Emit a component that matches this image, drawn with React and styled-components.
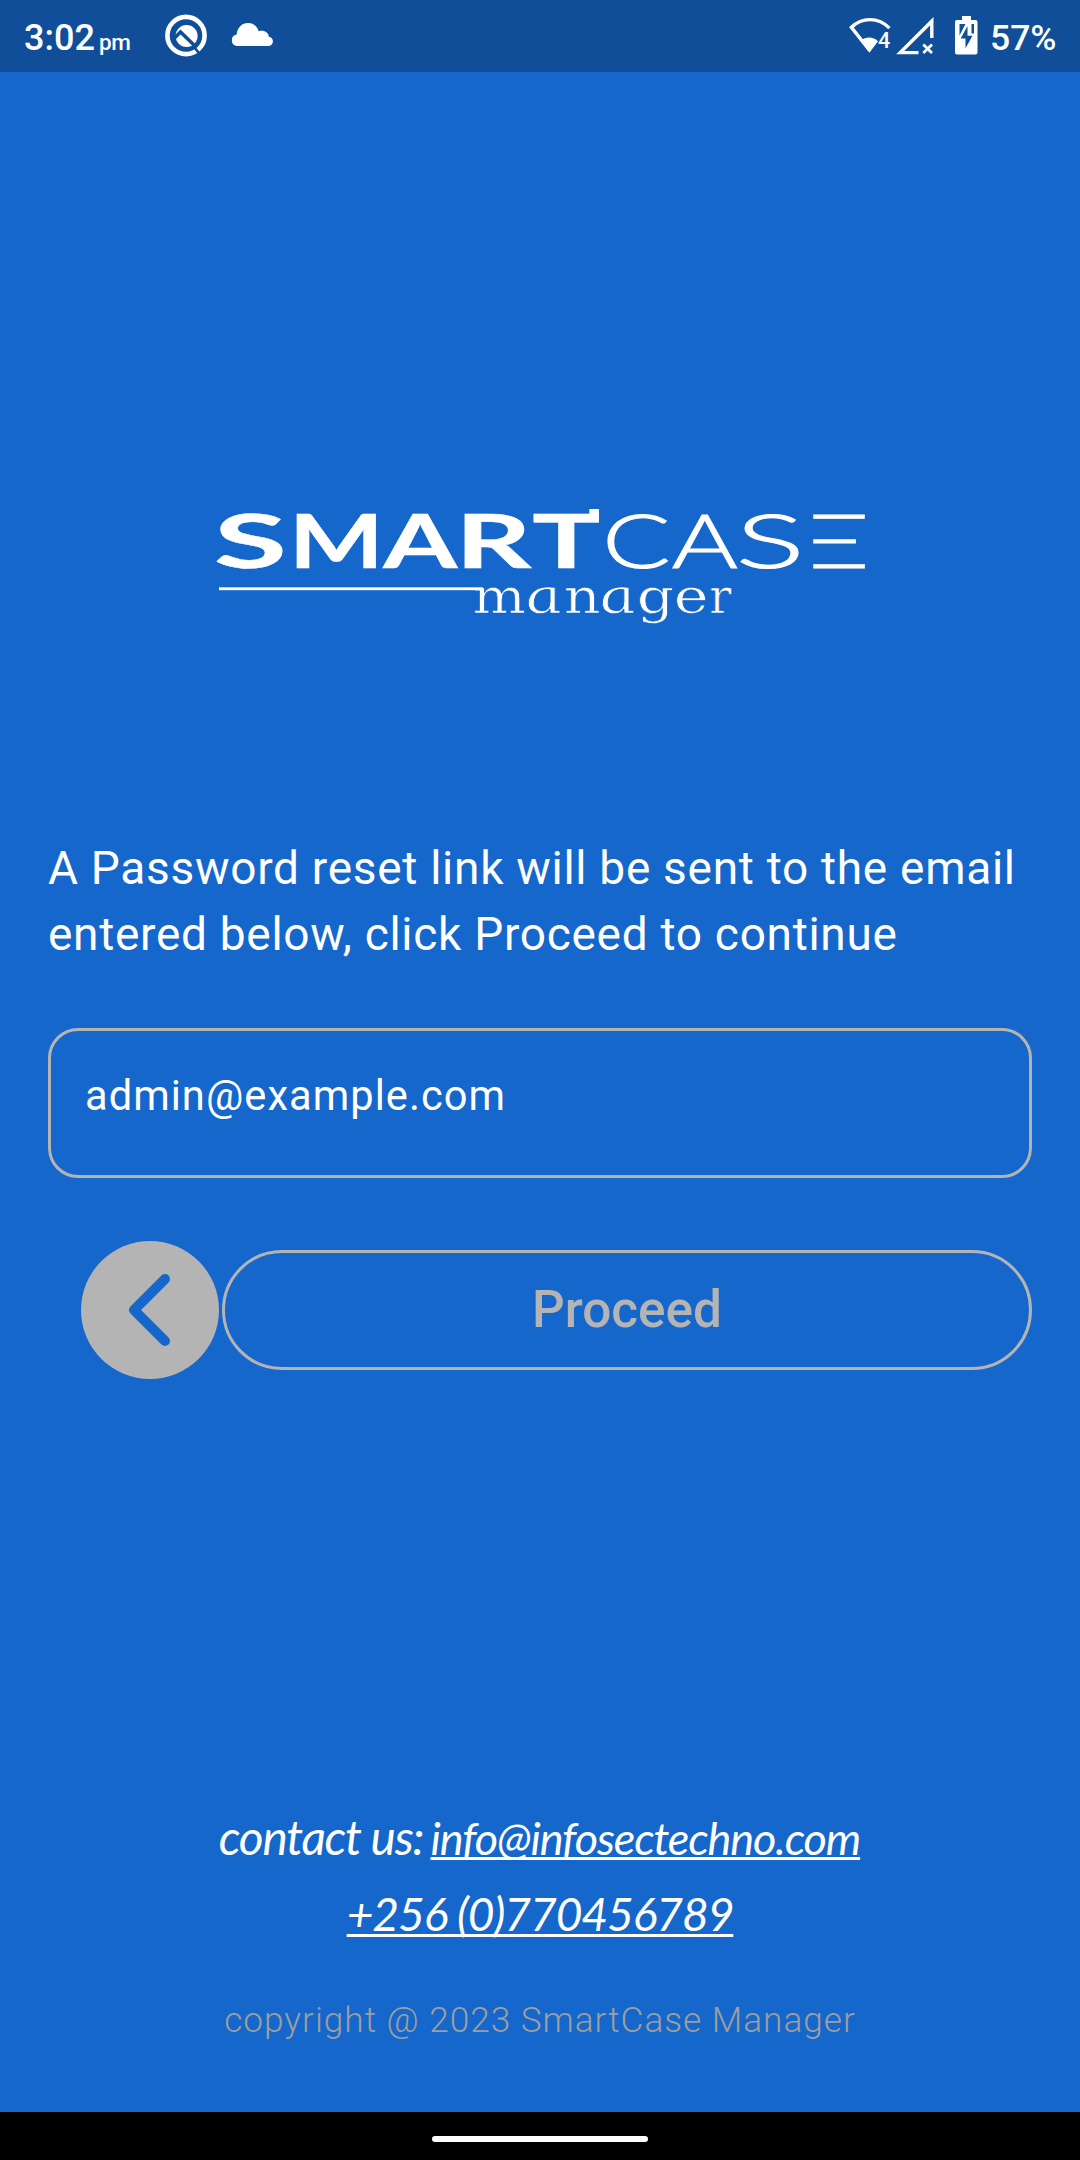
import React from "react";
import styled, { createGlobalStyle } from "styled-components";

const BLUE = "#1567cc";
const DARK_BLUE = "#104e99";
const GREY = "#b4b4b4";

const GlobalStyle = createGlobalStyle`
  * { box-sizing: border-box; }
  body { margin: 0; background: ${BLUE}; }
`;

const Screen = styled.div`
  display: flex;
  flex-direction: column;
  width: 1080px;
  height: 2160px;
  overflow: hidden;
  background: ${BLUE};
  color: #fff;
  font-family: Roboto, "Liberation Sans", sans-serif;
`;

const StatusBar = styled.header`
  display: flex;
  align-items: center;
  height: 72px;
  flex: none;
  padding: 0 24px 0 24px;
  background: ${DARK_BLUE};
`;

const Clock = styled.div`
  display: flex;
  align-items: baseline;
  gap: 4px;
  width: 140px;
  padding-top: 7px;
  font-size: 36px;
  font-weight: 500;
  line-height: 42px;
`;

const Meridiem = styled.span`
  font-size: 22.5px;
  letter-spacing: -0.3px;
`;

const StatusIcon = styled.svg`
  flex: none;
  width: ${(p) => p.$w}px;
  height: 72px;
  margin-right: ${(p) => p.$gap || 0}px;
`;

const Spacer = styled.div`
  flex: 1;
`;

const Percent = styled.div`
  width: 66px;
  padding-top: 4px;
  font-size: 35.5px;
  font-weight: 500;
  line-height: 42px;
`;

const Main = styled.main`
  display: flex;
  flex-direction: column;
  flex: 1;
  padding: 428px 48px 0;
`;

const Logo = styled.svg`
  width: 660px;
  height: 140px;
  align-self: center;
  overflow: visible;
`;

const Message = styled.p`
  margin: 195px 0 0;
  font-size: 46px;
  letter-spacing: 0.71px;
  line-height: 66px;
  white-space: nowrap;
`;

const EmailField = styled.div`
  display: flex;
  height: 150px;
  margin-top: 61px;
  padding: 40px 34px;
  border: 3px solid ${GREY};
  border-radius: 30px;
  font-size: 41.6px;
  letter-spacing: 1.05px;
  line-height: 50px;
`;

const Actions = styled.div`
  display: flex;
  align-items: center;
  gap: 3px;
  margin-top: 63px;
  padding-left: 33px;
`;

const BackButton = styled.button`
  display: flex;
  flex: none;
  width: 138px;
  height: 138px;
  padding: 0;
  border: 0;
  border-radius: 50%;
  background: ${GREY};
`;

const ProceedButton = styled.button`
  flex: 1;
  height: 120px;
  padding: 0;
  border: 3px solid ${GREY};
  border-radius: 60px;
  background: transparent;
  color: ${GREY};
  font: 500 51.3px/60px Roboto, sans-serif;
`;

const Footer = styled.footer`
  display: flex;
  flex-direction: column;
  align-items: center;
  height: 313px;
  flex: none;
`;

const ContactLine = styled.div`
  padding-right: ${(p) => p.$trail || 0}px;
  font-family: Lato, sans-serif;
  font-style: italic;
  line-height: 75px;
  font-size: ${(p) => p.$size}px;
  letter-spacing: ${(p) => p.$spacing}px;
  white-space: nowrap;
`;

const ContactLink = styled.a`
  margin-left: ${(p) => p.$pull || 0}px;
  color: inherit;
  font-size: ${(p) => p.$size}px;
  letter-spacing: ${(p) => p.$spacing}px;
  text-decoration: underline;
  text-decoration-thickness: 2.5px;
  text-underline-offset: ${(p) => p.$offset}px;
  text-decoration-skip-ink: none;
`;

const Copyright = styled.div`
  margin-top: 46px;
  color: #9e9e9e;
  font-size: 35.2px;
  font-weight: 300;
  letter-spacing: 0.98px;
  line-height: 46px;
`;

const NavBar = styled.nav`
  display: flex;
  justify-content: center;
  height: 48px;
  flex: none;
  padding-top: 24px;
  background: #000;
`;

const HomePill = styled.div`
  width: 216px;
  height: 6px;
  border-radius: 3px;
  background: #fff;
`;

/* Each letter: [char, ink left, ink right, glyph ink left and right per 100 units of font size] */
const BOLD = [
  ["S", 216.3, 283, 2, 52],
  ["M", 297, 375.7, 8, 86.5],
  ["A", 383.3, 457.3, 0, 69.5],
  ["R", 465, 531.7, 8, 64.5],
  ["T", 534, 599, 1.5, 58.8],
];
const THIN = [
  ["C", 607.3, 667.3, 5, 64.3],
  ["A", 672.7, 736.7, 1, 64.5],
  ["S", 740.7, 798.3, 4, 48.5],
  ["E", 813.3, 863.7, 17.3, 52.8],
];
const SLAB = [
  ["m", 474.3, 524.7, 3, 92.5],
  ["a", 527.5, 562, -1, 54],
  ["n", 565.5, 599.3, 3, 62],
  ["a", 601.7, 636, -1, 54],
  ["g", 639, 672.7, 4, 61.5],
  ["e", 676, 706, 4, 55],
  ["r", 710.7, 731.3, 3, 47.5],
];

function Letter({ glyph, size, y, skew = 0 }) {
  const [char, left, right, inkLeft, inkRight] = glyph;
  const sx = (right - left) / (((inkRight - inkLeft) * size) / 100);
  const x = left - (inkLeft * size * sx) / 100;
  return (
    <text fontSize={size} transform={`translate(${x} ${y}) scale(${sx} 1) skewX(${skew})`}>
      {char}
    </text>
  );
}

function SmartCaseLogo() {
  return (
    <Logo viewBox="210 500 660 140" role="img" aria-label="SmartCase Manager">
      <defs>
        <clipPath id="noStem">
          <rect x="600" y="505" width="199" height="70" />
          <rect x="813.3" y="505" width="60" height="70" />
        </clipPath>
      </defs>
      <g fill="#fff" stroke="#fff" strokeWidth="0.5" fontFamily="Lato, sans-serif" fontWeight="700">
        {BOLD.map((g, i) => <Letter key={i} glyph={g} size={75.4} y={568} />)}
      </g>
      <rect x="589.3" y="509" width="9.7" height="10" fill="#fff" />
      <g
        fill="#fff"
        stroke="#fff"
        strokeWidth="1.1"
        fontFamily="Lato, sans-serif"
        fontWeight="300"
        clipPath="url(#noStem)"
      >
        {THIN.map((g, i) => <Letter key={i} glyph={g} size={75} y={567.8} />)}
      </g>
      <g fill="#fff" stroke={BLUE} strokeWidth="0.7" fontFamily='"DejaVu Serif", serif'>
        {SLAB.map((g, i) => (
          <g key={i} fontStyle={g[0] === "a" ? "italic" : "normal"}>
            <Letter glyph={g} size={49} y={612.8} skew={g[0] === "a" ? 11 : 0} />
          </g>
        ))}
      </g>
      <rect x="219" y="587.3" width="264" height="2.9" fill="#fff" />
    </Logo>
  );
}

function BetaIcon() {
  return (
    <StatusIcon $w={44} $gap={22} viewBox="164 0 44 72">
      <circle cx="186" cy="35.5" r="18.6" fill="none" stroke="#fff" strokeWidth="4.6" />
      <circle cx="186.6" cy="36" r="11" fill="#fff" />
      <path d="M173 39.500l7.500-7.500 14.500 14" fill="none" stroke={DARK_BLUE} strokeWidth="3.600" />
      <path d="M194.500 47.500l5.500 7" stroke={DARK_BLUE} strokeWidth="2.600" />
    </StatusIcon>
  );
}

function CloudIcon() {
  return (
    <StatusIcon $w={44} viewBox="230 0 44 72">
      <path
        fill="#fff"
        d="M237.200 46a5.800 5.800 0 0 1-.5-11.500c.4-6.700 5.300-11.500 11.300-11.500 5.200 0 9.300 3.200 10.700 8.200 1.100-.4 2-.5 3-.5 4 0 6.800 2.500 7.200 6 2.300.3 4 2.100 4 4.500 0 2.700-2.100 4.800-4.800 4.800z"
      />
    </StatusIcon>
  );
}

function WifiIcon() {
  return (
    <StatusIcon $w={44} $gap={4} viewBox="848 0 44 72">
      <path
        d="M889.400 28.200C884 22.400 877 19.600 870 19.600S856.500 22.400 851.400 27.300L869.500 50.300"
        fill="none"
        stroke="#fff"
        strokeWidth="3.400"
      />
      <path d="M861 40.500c4.500-4 12.500-4 17 .8L869.400 52.800z" fill="#fff" />
      <text x="878" y="47.500" fill="#fff" fontSize="21.500" fontWeight="500" fontFamily="Roboto, sans-serif">
        4
      </text>
    </StatusIcon>
  );
}

function SignalIcon() {
  return (
    <StatusIcon $w={38} $gap={21} viewBox="896 0 38 72">
      <path d="M918.500 52.600H900.300L931.800 21.200V38" fill="none" stroke="#fff" strokeWidth="3.400" />
      <path d="M923.300 44.500l8.700 8.500M932 44.500l-8.700 8.500" stroke="#fff" strokeWidth="2.800" />
    </StatusIcon>
  );
}

function BatteryIcon() {
  return (
    <StatusIcon $w={23} $gap={12} viewBox="955 0 23 72">
      <path d="M962 16h9v4h4.500a2 2 0 0 1 2 2v30.500a2 2 0 0 1-2 2h-18.500a2 2 0 0 1-2-2v-30.500a2 2 0 0 1 2-2h5z" fill="#fff" />
      <path d="M959.500 24h6l-6 11.500zM971.500 24h2.500v9.500h-2.500zM967.500 26v9.800h5l-7 12.500v-9.800h-4.800z" fill={DARK_BLUE} />
    </StatusIcon>
  );
}

function BackIcon() {
  return (
    <svg width="138" height="138" viewBox="81 1241 138 138">
      <path
        d="M165 1279L134 1310L165 1341"
        fill="none"
        stroke={BLUE}
        strokeWidth="10"
        strokeLinecap="round"
        strokeLinejoin="round"
      />
    </svg>
  );
}

export default function App() {
  return (
    <Screen>
      <GlobalStyle />
      <StatusBar>
        <Clock>
          3:02<Meridiem>pm</Meridiem>
        </Clock>
        <BetaIcon />
        <CloudIcon />
        <Spacer />
        <WifiIcon />
        <SignalIcon />
        <BatteryIcon />
        <Percent>57%</Percent>
      </StatusBar>
      <Main>
        <SmartCaseLogo />
        <Message>
          A Password reset link will be sent to the email
          <br />
          entered below, click Proceed to continue
        </Message>
        <EmailField>admin@example.com</EmailField>
        <Actions>
          <BackButton aria-label="Back">
            <BackIcon />
          </BackButton>
          <ProceedButton>Proceed</ProceedButton>
        </Actions>
      </Main>
      <Footer>
        <ContactLine $size={47.8} $spacing={-1.27} $trail={1}>
          contact us:{" "}
          <ContactLink $size={45} $spacing={-1.11} $offset={2} $pull={-2.5}>
            info@infosectechno.com
          </ContactLink>
        </ContactLine>
        <ContactLine $size={46.2} $spacing={-1.1}>
          <ContactLink $size={46.2} $spacing={-1.1} $offset={2.8}>
            +256 (0)770456789
          </ContactLink>
        </ContactLine>
        <Copyright>copyright @ 2023 SmartCase Manager</Copyright>
      </Footer>
      <NavBar>
        <HomePill />
      </NavBar>
    </Screen>
  );
}
